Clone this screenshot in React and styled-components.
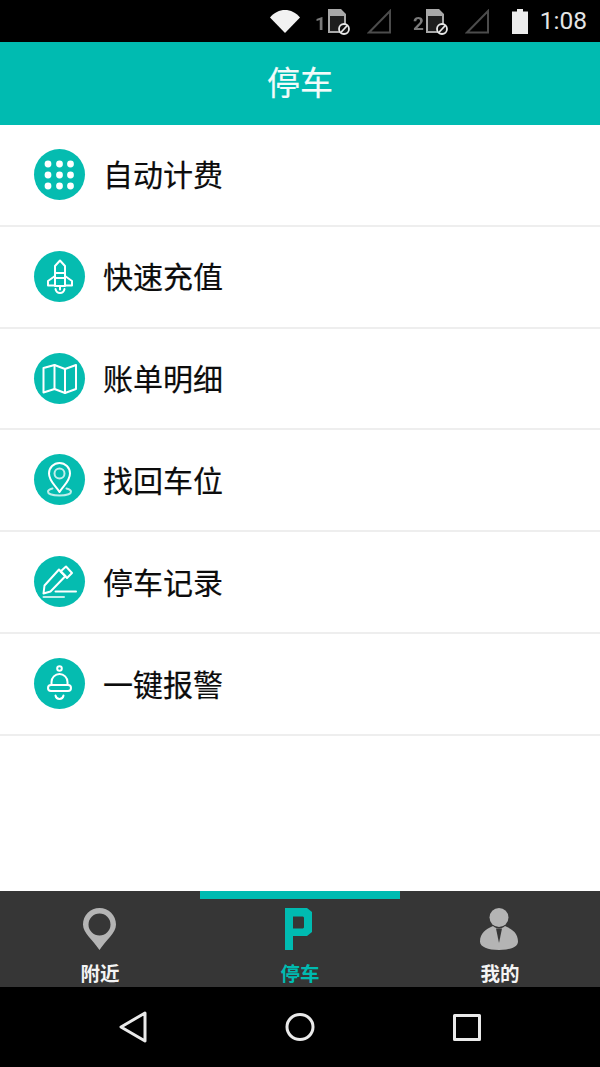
import React from "react";
import styled, { createGlobalStyle } from "styled-components";

const Global = createGlobalStyle`
  html, body { margin: 0; padding: 0; background: #fff; }
  * { box-sizing: border-box; }
`;
const cjk = `"Noto Sans CJK SC", "Noto Sans", sans-serif`;

const Screen = styled.div`
  width: 600px; height: 1067px; display: flex; flex-direction: column; overflow: hidden;
  font-family: ${cjk}; background: #fff;
`;
const StatusBar = styled.div`
  height: 42px; background: #000; display: flex; align-items: center; justify-content: flex-end;
  padding-right: 13px; flex: none;
`;
const StatusSvg = styled.svg`
  display: block; flex: none; margin-left: ${p => p.$ml || 0}px; filter: blur(0.4px);
`;
const Clock = styled.span`
  font: 24.5px/1 Roboto, sans-serif; color: #e4e4e4; margin-left: 12px;
`;
const Header = styled.header`
  height: 83px; flex: none; background: #00bbb1; color: #f4fbfa; display: flex; align-items: center;
  justify-content: center; font-size: 33px; line-height: 1; padding-bottom: 4px;
  -webkit-text-stroke: 0.2px #f4fbfa;
`;
const List = styled.ul`
  list-style: none; margin: 0; padding: 0; flex: 1;
`;
const Row = styled.li`
  height: 101.83px; border-bottom: 2px solid #eeeeee; display: flex; align-items: center;
  padding: 0 0 1px 34px; gap: 18px;
`;
const Badge = styled.span`
  width: 51px; height: 51px; border-radius: 50%; background: #05bcb0; display: flex;
  align-items: center; justify-content: center; flex: none;
`;
const BadgeSvg = styled.svg`
  display: block; filter: blur(0.5px); fill: none; stroke: #fff; stroke-width: 2;
  stroke-linejoin: round; stroke-linecap: round;
`;
const Label = styled.span`
  font-size: 30px; line-height: 1; color: #0c0c0c; -webkit-text-stroke: 0.2px #0c0c0c;
  padding-bottom: 2px;
`;
const TabBar = styled.nav`
  height: 96px; flex: none; background: #363636; display: flex;
`;
const Tab = styled.div`
  flex: 1; display: flex; flex-direction: column; align-items: center; position: relative;
  padding-top: 17px; color: ${p => (p.$active ? "#00bbb1" : "#f4f4f4")};
`;
const TabIcon = styled.svg`
  display: block; flex: none; filter: blur(0.5px);
`;
const Indicator = styled.span`
  position: absolute; left: 0; right: 0; top: 0; height: 8px; background: #00bbb1;
`;
const TabLabel = styled.span`
  font-size: 19.5px; font-weight: 700; line-height: 1; margin-top: 13px;
`;
const NavBar = styled.div`
  height: 80px; flex: none; background: #000; display: flex; align-items: center;
  justify-content: center;
`;
const NavCell = styled.div`
  width: 167px; display: flex; justify-content: center; align-items: center;
`;
const NavSvg = styled.svg`
  display: block; fill: none; stroke: #eaeaea; stroke-width: 3; stroke-linejoin: round;
  filter: blur(0.4px);
`;

const Dots = () => (
  <BadgeSvg width="51" height="51" viewBox="0 0 51 51" style={{ stroke: "none", fill: "#fff" }}>
    {[15, 26, 37].flatMap(y => [14, 25.5, 36.5].map(x => <circle key={x + "-" + y} cx={x} cy={y} r="3.4" />))}
  </BadgeSvg>
);
const Rocket = () => (
  <BadgeSvg width="51" height="51" viewBox="0 0 51 51">
    <path d="M26 9.5l-5 5.500v20h10V15z" />
    <path d="M21 22h10M21 27h10" />
    <path d="M21 25l-7 5v4.500h7M31 25l7 5v4.500h-7" />
    <path d="M21.500 38c.5 2.500 2 4 4.500 4s4-1.500 4.500-4M26 35v3.500" />
  </BadgeSvg>
);
const MapIcon = () => (
  <BadgeSvg width="51" height="51" viewBox="0 0 51 51">
    <path d="M9.500 15L20.500 12 31 16 42 12v24L31 40 20.500 36 9.500 39.500z" />
    <path d="M20.500 12v24M31 16v24" />
  </BadgeSvg>
);
const Pin = () => (
  <BadgeSvg width="51" height="51" viewBox="0 0 51 51">
    <path d="M25.500 38c-4.500-7-10.500-11-10.500-18.500a10.500 10.500 0 0 1 21 0C36 27 30 31 25.500 38z" />
    <circle cx="25.500" cy="19.500" r="5" opacity=".75" />
    <path d="M18.500 34.500c-3 .8-4.500 2-4.500 3.200 0 2.200 5 3.800 11.500 3.800S37 39.900 37 37.700c0-1.200-1.500-2.400-4.500-3.200" opacity=".75" />
  </BadgeSvg>
);
const Pen = () => (
  <BadgeSvg width="51" height="51" viewBox="0 0 51 51">
    <path d="M25 13.500L31.500 20 16.500 35.500 9.500 37.500 10.500 29.500z" />
    <path d="M32 10.500l6 6.500-5 5-6.500-6.500z" />
    <path d="M21.500 35.500H42" />
    <path d="M9.500 41H30" opacity=".75" />
  </BadgeSvg>
);
const Bell = () => (
  <BadgeSvg width="51" height="51" viewBox="0 0 51 51">
    <circle cx="25.500" cy="10.500" r="2.300" />
    <path d="M17.500 27v-3a8 8 0 0 1 16 0v3" />
    <rect x="14" y="27" width="23" height="6" rx="3" />
    <path d="M21.500 37.500c.5 2.500 2 3.500 4 3.500s3.500-1 4-3.500" />
  </BadgeSvg>
);

const SimIcon = ({ n, ml }) => (
  <StatusSvg $ml={ml} width="36" height="27" viewBox="0 0 36 27">
    <text x="0" y="22" fontFamily="Roboto, sans-serif" fontWeight="700" fontSize="19" fill="#7a7a7a">{n}</text>
    <path d="M13 1h13l5 5v12l-4 3-2 4H13z" fill="#a8a8a8" />
    <path d="M15 8h14v9l-3 2-2 4h-9z" fill="#1e1e1e" />
    <circle cx="29" cy="21" r="5" fill="#111" stroke="#e8e8e8" strokeWidth="1.8" />
    <path d="M25.800 24.500l6.500-7" stroke="#e8e8e8" strokeWidth="1.8" />
  </StatusSvg>
);
const Signal = ({ ml }) => (
  <StatusSvg $ml={ml} width="24" height="25" viewBox="0 0 24 25">
    <path d="M2 23.500L23 2v21.500z" fill="none" stroke="#4c4c4c" strokeWidth="2" />
  </StatusSvg>
);

const items = [
  ["自动计费", Dots],
  ["快速充值", Rocket],
  ["账单明细", MapIcon],
  ["找回车位", Pin],
  ["停车记录", Pen],
  ["一键报警", Bell],
];

const App = () => (
  <Screen>
    <Global />
    <StatusBar>
      <StatusSvg width="30" height="24" viewBox="0 0 30 24">
        <path d="M0 8.500C8-1.500 22-1.500 30 8.500L15 24z" fill="#f2f2f2" />
      </StatusSvg>
      <SimIcon n="1" ml={15} />
      <Signal ml={16} />
      <SimIcon n="2" ml={22} />
      <Signal ml={16} />
      <StatusSvg $ml={23} width="16" height="25" viewBox="0 0 16 25">
        <path d="M5 0h6v2.500h5V25H0V2.500h5z" fill="#ececec" />
      </StatusSvg>
      <Clock>1:08</Clock>
    </StatusBar>
    <Header>停车</Header>
    <List>
      {items.map(([t, I]) => (
        <Row key={t}>
          <Badge><I /></Badge>
          <Label>{t}</Label>
        </Row>
      ))}
    </List>
    <TabBar>
      <Tab>
        <TabIcon width="33" height="42" viewBox="0 0 33 42" style={{ marginRight: 2 }}>
          <path fillRule="evenodd" d="M16.500 0C7.400 0 0 7.400 0 16.500 0 25 10 32 16.500 42 23 32 33 25 33 16.500 33 7.400 25.600 0 16.500 0zm0 5.500a11 11 0 1 1 0 22 11 11 0 0 1 0-22z" fill="#b4b4b4" />
        </TabIcon>
        <TabLabel>附近</TabLabel>
      </Tab>
      <Tab $active>
        <Indicator />
        <TabIcon width="27" height="42" viewBox="0 0 27 42" style={{ marginRight: 3 }}>
          <path fillRule="evenodd" d="M0 0h22l5 4v20l-5 4H8v14H0zM8 8.500v12h10l1-1V9.500l-1-1z" fill="#00bbb1" />
        </TabIcon>
        <TabLabel>停车</TabLabel>
      </Tab>
      <Tab>
        <TabIcon width="38" height="42" viewBox="0 0 38 42" style={{ marginRight: 2 }}>
          <circle cx="19" cy="9.500" r="9.500" fill="#b4b4b4" />
          <path d="M13 18C6 21 0 25 0 33.500 0 39 8 42 19 42s19-3 19-8.500C38 25 32 21 25 18c-1.500 1.500-3.500 2.500-6 2.500s-4.500-1-6-2.500z" fill="#b4b4b4" />
          <path d="M16 20.500h6L19 35z" fill="#363636" />
        </TabIcon>
        <TabLabel>我的</TabLabel>
      </Tab>
    </TabBar>
    <NavBar>
      <NavCell>
        <NavSvg width="28" height="32" viewBox="0 0 28 32">
          <path d="M26 2L2 16l24 14z" />
        </NavSvg>
      </NavCell>
      <NavCell>
        <NavSvg width="30" height="30" viewBox="0 0 30 30">
          <ellipse cx="15" cy="15" rx="13" ry="12.500" />
        </NavSvg>
      </NavCell>
      <NavCell>
        <NavSvg width="28" height="27" viewBox="0 0 28 27">
          <rect x="1.500" y="1.500" width="25" height="24" />
        </NavSvg>
      </NavCell>
    </NavBar>
  </Screen>
);

export default App;
